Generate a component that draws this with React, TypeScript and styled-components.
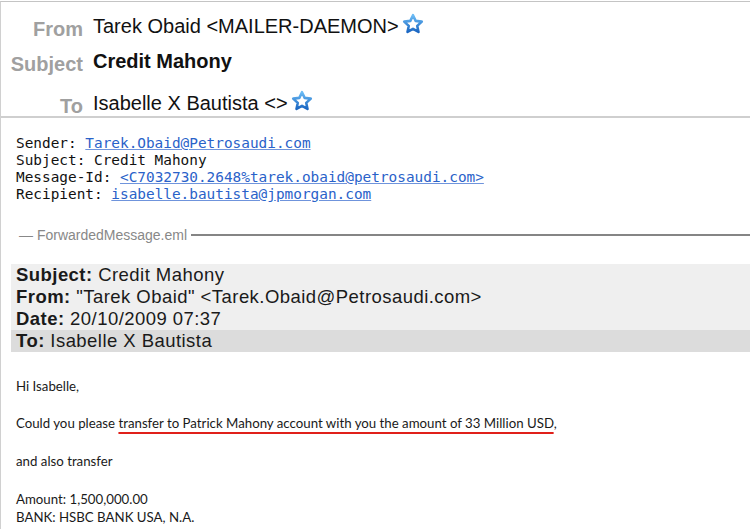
import React from "react";
import styled, { createGlobalStyle } from "styled-components";

const GlobalStyle = createGlobalStyle`
  html, body {
    margin: 0;
    padding: 0;
    background: #fff;
  }
  body {
    font-family: "Liberation Sans", Arial, sans-serif;
  }
`;

const Window = styled.div`
  width: 750px;
  height: 529px;
  overflow: hidden;
  box-sizing: border-box;
  border-top: 1px solid #c4c4c4;
  border-left: 1px solid #d0d0d0;
  margin-top: 1px;
  background: #fff;
`;

const HeaderPane = styled.div`
  display: grid;
  grid-template-columns: 82px 1fr;
  column-gap: 10px;
  padding: 10px 0 0 0;
  height: 116px;
  box-sizing: border-box;
  border-bottom: 2px solid #cfcfcf;
`;

const HeaderRow = styled.div<{ $height: number }>`
  display: contents;
  & > * {
    height: ${(p) => p.$height}px;
  }
`;

const HeaderLabel = styled.div`
  text-align: right;
  color: #a0a0a0;
  font-weight: bold;
  font-size: 20px;
  line-height: 28px;
  padding-top: 3px;
  box-sizing: border-box;
  white-space: nowrap;
`;

const HeaderValue = styled.div<{ $bold?: boolean }>`
  display: flex;
  align-items: flex-start;
  gap: 3px;
  color: #111;
  font-size: 20px;
  line-height: 28px;
  font-weight: ${(p) => (p.$bold ? "bold" : "normal")};
  white-space: nowrap;
`;

const StarIcon = styled.svg`
  width: 22px;
  height: 22px;
  margin-top: 1px;
`;

const Star = () => (
  <StarIcon viewBox="0 0 24 24">
    <defs>
      <linearGradient id="starStroke" x1="0" y1="0" x2="0" y2="1">
        <stop offset="0" stopColor="#6cbcf5" />
        <stop offset="1" stopColor="#1a66c2" />
      </linearGradient>
    </defs>
    <path
      d="M12 2.4l2.9 6.2 6.7.8-5 4.6 1.4 6.7L12 17.3l-6 3.4 1.4-6.7-5-4.6 6.7-.8z"
      fill="#fff"
      stroke="url(#starStroke)"
      strokeWidth="2.8"
      strokeLinejoin="round"
    />
  </StarIcon>
);

const MetaBlock = styled.div`
  padding: 17px 0 0 15px;
  font-family: "DejaVu Sans Mono", "Liberation Mono", monospace;
  font-size: 14.4px;
  line-height: 17px;
  color: #111;
`;

const MetaLine = styled.div`
  white-space: nowrap;
`;

const MetaLink = styled.a`
  color: #2a62c9;
  text-decoration: underline;
  text-decoration-color: #6f94dc;
`;

const Divider = styled.div`
  display: flex;
  align-items: center;
  gap: 4px;
  margin: 24px 0 0 18px;
  color: #888;
  font-size: 14px;
  line-height: 16px;
`;

const DividerRule = styled.div`
  flex: 1;
  height: 2px;
  background: #858585;
`;

const ForwardTable = styled.div`
  margin: 21px 0 0 10px;
  font-family: "Liberation Sans", Arial, sans-serif;
  font-size: 18.5px;
  letter-spacing: 0.45px;
  color: #1a1a1a;
`;

const ForwardRow = styled.div<{ $dark?: boolean }>`
  height: 22px;
  line-height: 22px;
  padding-left: 5px;
  background: ${(p) => (p.$dark ? "#dcdcdc" : "#efefef")};
  white-space: nowrap;
`;

const FieldName = styled.b`
  font-weight: bold;
`;

const Body = styled.div`
  padding: 25px 0 0 15px;
  font-family: "Lato", "Liberation Sans", sans-serif;
  font-size: 13.25px;
  color: #1a1a1a;
`;

const Para = styled.p<{ $gap: number }>`
  margin: 0 0 ${(p) => p.$gap}px 0;
  line-height: 18px;
  white-space: nowrap;
`;

const Marked = styled.span`
  text-decoration: underline;
  text-decoration-color: #e0201a;
  text-decoration-thickness: 1.5px;
  text-underline-offset: 4px;
`;

export default function App() {
  return (
    <>
      <GlobalStyle />
      <Window>
        <HeaderPane>
          <HeaderRow $height={35}>
            <HeaderLabel>From</HeaderLabel>
            <HeaderValue>
              Tarek Obaid &lt;MAILER-DAEMON&gt;
              <Star />
            </HeaderValue>
          </HeaderRow>
          <HeaderRow $height={42}>
            <HeaderLabel>Subject</HeaderLabel>
            <HeaderValue $bold>Credit Mahony</HeaderValue>
          </HeaderRow>
          <HeaderRow $height={30}>
            <HeaderLabel>To</HeaderLabel>
            <HeaderValue>
              Isabelle X Bautista &lt;&gt;
              <Star />
            </HeaderValue>
          </HeaderRow>
        </HeaderPane>

        <MetaBlock>
          <MetaLine>
            Sender: <MetaLink>Tarek.Obaid@Petrosaudi.com</MetaLink>
          </MetaLine>
          <MetaLine>Subject: Credit Mahony</MetaLine>
          <MetaLine>
            Message-Id:{" "}
            <MetaLink>&lt;C7032730.2648%tarek.obaid@petrosaudi.com&gt;</MetaLink>
          </MetaLine>
          <MetaLine>
            Recipient: <MetaLink>isabelle.bautista@jpmorgan.com</MetaLink>
          </MetaLine>
        </MetaBlock>

        <Divider>
          <span>— ForwardedMessage.eml</span>
          <DividerRule />
        </Divider>

        <ForwardTable>
          <ForwardRow>
            <FieldName>Subject:</FieldName> Credit Mahony
          </ForwardRow>
          <ForwardRow>
            <FieldName>From:</FieldName> "Tarek Obaid" &lt;Tarek.Obaid@Petrosaudi.com&gt;
          </ForwardRow>
          <ForwardRow>
            <FieldName>Date:</FieldName> 20/10/2009 07:37
          </ForwardRow>
          <ForwardRow $dark>
            <FieldName>To:</FieldName> Isabelle X Bautista
          </ForwardRow>
        </ForwardTable>

        <Body>
          <Para $gap={19}>Hi Isabelle,</Para>
          <Para $gap={20}>
            Could you please{" "}
            <Marked>
              transfer to Patrick Mahony account with you the amount of 33 Million USD
            </Marked>
            ,
          </Para>
          <Para $gap={20}>and also transfer</Para>
          <Para $gap={0}>Amount: 1,500,000.00</Para>
          <Para $gap={0}>BANK: HSBC BANK USA, N.A.</Para>
        </Body>
      </Window>
    </>
  );
}
